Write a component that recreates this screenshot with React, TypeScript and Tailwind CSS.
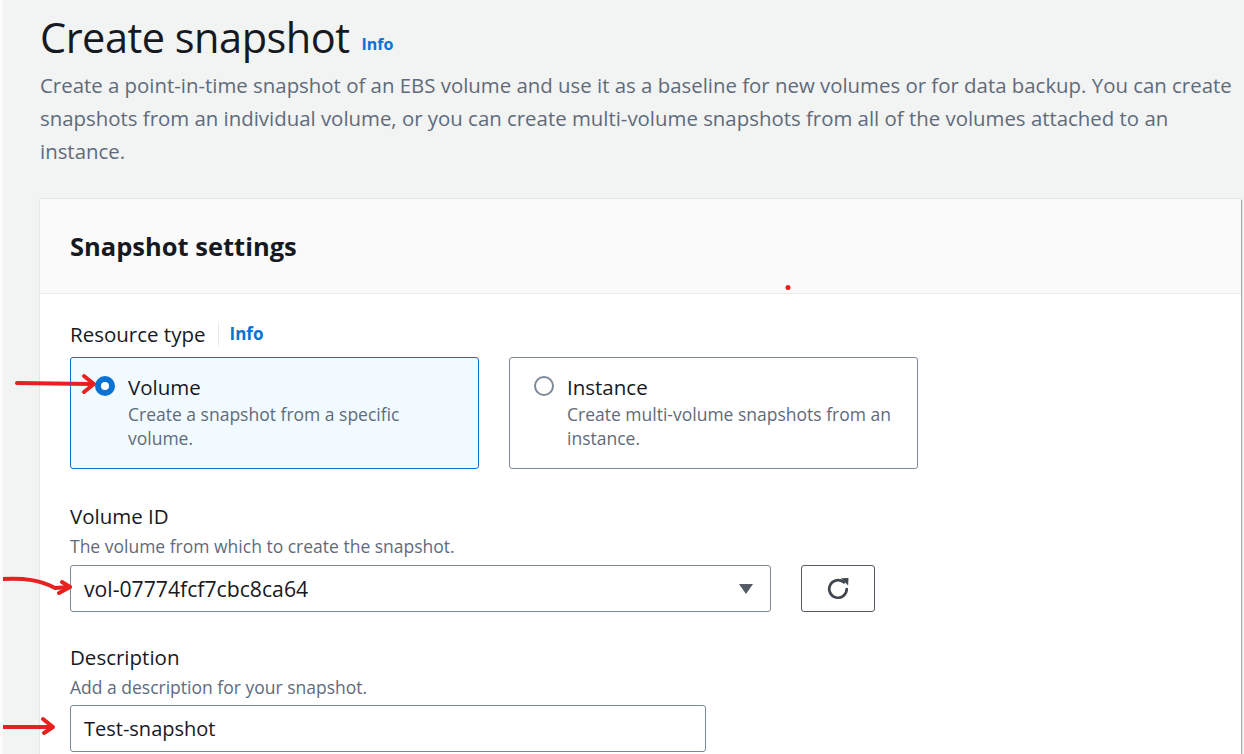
import { useState } from 'react'

function Radio({ checked }: { checked: boolean }) {
  return checked ? (
    <span className="mt-[3px] flex h-[20px] w-[20px] shrink-0 items-center justify-center rounded-full bg-[#0972d3]">
      <span className="h-[8px] w-[8px] rounded-full bg-white" />
    </span>
  ) : (
    <span className="mt-[3px] h-[20px] w-[20px] shrink-0 rounded-full border-2 border-[#7d8998] bg-white" />
  )
}

function Tile({
  title,
  desc,
  checked,
  onClick,
}: {
  title: string
  desc: string
  checked: boolean
  onClick: () => void
}) {
  return (
    <div
      onClick={onClick}
      className={`flex h-[112px] w-[409px] cursor-pointer gap-[13px] rounded-[3px] border px-[24px] pt-[15px] ${
        checked ? 'border-[#0972d3] bg-[#f1faff]' : 'border-[#7d8998] bg-white'
      }`}
    >
      <Radio checked={checked} />
      <div className="flex flex-col">
        <span className="text-[20.5px] leading-[28px] text-[#16191f]">{title}</span>
        <span className="mt-[1px] text-[17.5px] leading-[24px] text-[#5f6b7a]">{desc}</span>
      </div>
    </div>
  )
}

export default function App() {
  const [type, setType] = useState<'volume' | 'instance'>('volume')

  return (
    <div className="relative h-[754px] w-[1244px] overflow-hidden border-l-[3px] border-[#fbfbfb] bg-[#f2f3f3] font-['Open_Sans',sans-serif]">
      <div className="pl-[37px] pt-[11px]">
        <div className="flex items-end gap-[12px]">
          <h1 className="text-[41.5px] leading-[52px] tracking-[-0.5px] text-[#16191f]">Create snapshot</h1>
          <a className="mb-[7px] text-[16px] font-bold text-[#0972d3]">Info</a>
        </div>
        <p className="mt-[6px] w-[1204px] text-[20.4px] leading-[33px] text-[#5f6b7a]">
          Create a point-in-time snapshot of an EBS volume and use it as a baseline for new volumes or for data backup. You can create
          snapshots from an individual volume, or you can create multi-volume snapshots from all of the volumes attached to an
          instance.
        </p>

        {/* Settings card */}
        <div className="mt-[31px] w-[1201px] bg-white shadow-[1px_1px_1px_rgba(0,28,36,0.3),0_0_1px_rgba(0,28,36,0.3)]">
          <div className="flex h-[95px] items-center border-b border-[#eaeded] bg-[#fafafa] px-[30px]">
            <h2 className="text-[25.5px] font-bold text-[#16191f]">Snapshot settings</h2>
          </div>

          <div className="px-[30px] pt-[26px] pb-[20px]">
            <div className="flex items-center">
              <span className="text-[20.5px] leading-[28px] text-[#16191f]">Resource type</span>
              <span className="ml-[12px] mr-[11px] h-[24px] w-px bg-[#e9ebed]" />
              <a className="text-[17px] font-bold text-[#0972d3]">Info</a>
            </div>
            <div className="mt-[9px] flex gap-[30px]">
              <Tile
                title="Volume"
                desc="Create a snapshot from a specific volume."
                checked={type === 'volume'}
                onClick={() => setType('volume')}
              />
              <Tile
                title="Instance"
                desc="Create multi-volume snapshots from an instance."
                checked={type === 'instance'}
                onClick={() => setType('instance')}
              />
            </div>

            <div className="mt-[33px]">
              <div className="text-[20.5px] leading-[28px] text-[#16191f]">Volume ID</div>
              <div className="mt-[2px] text-[17.5px] leading-[28px] text-[#5f6b7a]">The volume from which to create the snapshot.</div>
              <div className="mt-[5px] flex gap-[30px]">
                <div className="flex h-[47px] w-[701px] items-center justify-between rounded-[3px] border border-[#7d8998] bg-white pl-[13px] pr-[16px]">
                  <span className="text-[21.2px] text-[#16191f]">vol-07774fcf7cbc8ca64</span>
                  <svg width="16" height="12" viewBox="0 0 16 12">
                    <path d="M1 1h14L8 11z" fill="#545b64" />
                  </svg>
                </div>
                <button className="flex h-[47px] w-[74px] items-center justify-center rounded-[3px] border border-[#545b64] bg-white">
                  <svg width="28" height="28" viewBox="0 0 24 24" fill="none">
                    <path d="M19.5 12a7.5 7.5 0 1 1-2.6-5.7" stroke="#414750" strokeWidth="2.3" strokeLinecap="round" />
                    <path d="M14.5 2.8L21 2.5l-0.3 6.5z" fill="#414750" />
                  </svg>
                </button>
              </div>
            </div>

            <div className="mt-[31px]">
              <div className="text-[20.5px] leading-[28px] text-[#16191f]">Description</div>
              <div className="mt-[2px] text-[17.5px] leading-[28px] text-[#5f6b7a]">Add a description for your snapshot.</div>
              <div className="mt-[4px] flex h-[47px] w-[636px] items-center rounded-[3px] border border-[#7d8998] bg-white px-[13px]">
                <span className="text-[20px] text-[#16191f]">Test-snapshot</span>
              </div>
            </div>
          </div>
        </div>
      </div>

      {/* red annotation marks */}
      <svg className="pointer-events-none absolute left-[-3px] top-0" width="1244" height="754" viewBox="0 0 1244 754" fill="none">
        <g stroke="#e8201f" strokeWidth="4" strokeLinecap="round" strokeLinejoin="round">
          <path d="M17 383 L90 384" />
          <path d="M84 376 L94 384 L84 392" />
          <path d="M3 579 C25 578 40 580 55 588 L70 587" />
          <path d="M62 582 L70 587 L59 593" />
          <path d="M2 727 L52 727" />
          <path d="M43 719 L53 727 L44 733" />
        </g>
        <circle cx="788" cy="287.5" r="2.5" fill="#e8201f" />
      </svg>
    </div>
  )
}
